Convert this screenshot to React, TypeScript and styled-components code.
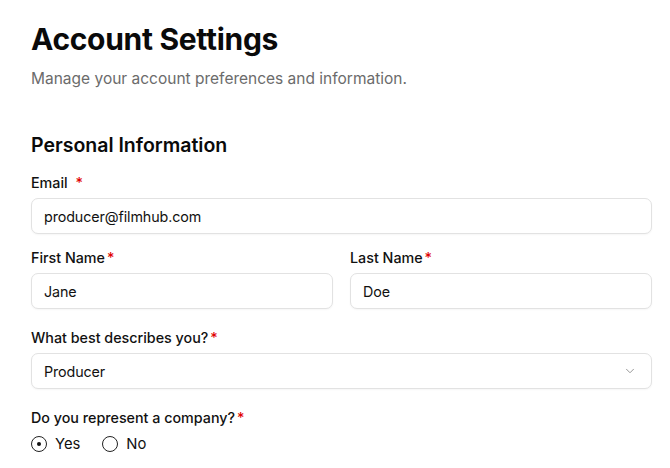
import styled, { createGlobalStyle } from "styled-components";
import { useState } from "react";

const GlobalStyle = createGlobalStyle`
  body {
    margin: 0;
    background: #ffffff;
    font-family: Inter, "Noto Sans", sans-serif;
    color: #111111;
  }
`;

const roles = ["Producer", "Director", "Writer", "Actor", "Other"];

const App = () => {
  const [email, setEmail] = useState("producer@filmhub.com");
  const [firstName, setFirstName] = useState("Jane");
  const [lastName, setLastName] = useState("Doe");
  const [role, setRole] = useState("Producer");
  const [company, setCompany] = useState("yes");

  return (
    <>
      <GlobalStyle />
      <Page>
        <Header>
          <Title>Account Settings</Title>
          <Subtitle>Manage your account preferences and information.</Subtitle>
        </Header>

        <Section>
          <SectionTitle>Personal Information</SectionTitle>

          <Field after={15}>
            <Label>
              Email <Required spaced>*</Required>
            </Label>
            <Input value={email} onChange={(e) => setEmail(e.target.value)} />
          </Field>

          <Row>
            <Field>
              <Label>
                First Name<Required>*</Required>
              </Label>
              <Input value={firstName} onChange={(e) => setFirstName(e.target.value)} />
            </Field>
            <Field>
              <Label>
                Last Name<Required>*</Required>
              </Label>
              <Input value={lastName} onChange={(e) => setLastName(e.target.value)} />
            </Field>
          </Row>

          <Field>
            <Label>
              What best describes you?<Required>*</Required>
            </Label>
            <SelectWrap>
              <Select value={role} onChange={(e) => setRole(e.target.value)}>
                {roles.map((r) => (
                  <option key={r}>{r}</option>
                ))}
              </Select>
              <Chevron width="14" height="14" viewBox="0 0 24 24">
                <path d="M6 9l6 6 6-6" />
              </Chevron>
            </SelectWrap>
          </Field>

          <Field>
            <Label>
              Do you represent a company?<Required>*</Required>
            </Label>
            <RadioGroup>
              <RadioOption>
                <Radio checked={company === "yes"} onClick={() => setCompany("yes")} />
                Yes
              </RadioOption>
              <RadioOption>
                <Radio checked={company === "no"} onClick={() => setCompany("no")} />
                No
              </RadioOption>
            </RadioGroup>
          </Field>
        </Section>
      </Page>
    </>
  );
};

const Page = styled.div`
  width: 621px;
  padding: 20px 0 0 31px;
  display: flex;
  flex-direction: column;
`;

const Header = styled.div`
  display: flex;
  flex-direction: column;
  gap: 10px;
`;

const Title = styled.h1`
  margin: 0;
  font-size: 30px;
  line-height: 38px;
  font-weight: 700;
  letter-spacing: -0.3px;
  color: #0a0a0a;
`;

const Subtitle = styled.p`
  margin: 0;
  font-size: 15.5px;
  line-height: 22px;
  color: #6b6b6b;
`;

const Section = styled.div`
  margin-top: 42px;
  display: flex;
  flex-direction: column;
`;

const SectionTitle = styled.h2`
  margin: 0 0 16px;
  font-size: 19.5px;
  line-height: 26px;
  font-weight: 600;
  color: #0a0a0a;
`;

const Field = styled.div<{ after?: number }>`
  flex: 1;
  display: flex;
  flex-direction: column;
  gap: 6px;
  margin-bottom: ${({ after }) => after ?? 20}px;
`;

const Row = styled.div`
  display: flex;
  gap: 17px;
`;

const Label = styled.label`
  font-size: 14.3px;
  line-height: 18px;
  font-weight: 500;
  color: #111111;
`;

const Required = styled.span<{ spaced?: boolean }>`
  color: #e00000;
  margin-left: ${({ spaced }) => (spaced ? "4px" : "2px")};
`;

const Input = styled.input`
  box-sizing: border-box;
  width: 100%;
  height: 36px;
  padding: 0 12px;
  border: 1px solid #e2e2e2;
  border-radius: 7px;
  font-family: inherit;
  font-size: 14.3px;
  letter-spacing: -0.1px;
  color: #111111;
  background: #ffffff;
  box-shadow: 0 1px 2px rgba(0, 0, 0, 0.04);
  outline: none;
`;

const SelectWrap = styled.div`
  position: relative;
`;

const Select = styled.select`
  box-sizing: border-box;
  width: 100%;
  height: 36px;
  padding: 0 12px;
  border: 1px solid #e2e2e2;
  border-radius: 7px;
  font-family: inherit;
  font-size: 14.3px;
  letter-spacing: -0.1px;
  color: #111111;
  background: #ffffff;
  box-shadow: 0 1px 2px rgba(0, 0, 0, 0.04);
  appearance: none;
  outline: none;
`;

const Chevron = styled.svg`
  position: absolute;
  right: 15px;
  top: 11px;
  fill: none;
  stroke: #8f8f8f;
  stroke-width: 1.6;
  stroke-linecap: round;
  stroke-linejoin: round;
  pointer-events: none;
`;

const RadioGroup = styled.div`
  display: flex;
  gap: 22px;
  margin-top: 2px;
`;

const RadioOption = styled.label`
  display: flex;
  align-items: center;
  gap: 8px;
  font-size: 14.8px;
  color: #111111;
  cursor: pointer;
`;

const Radio = styled.span<{ checked: boolean }>`
  box-sizing: border-box;
  width: 16px;
  height: 16px;
  border-radius: 50%;
  border: 1.5px solid #222222;
  display: flex;
  align-items: center;
  justify-content: center;

  &::after {
    content: "";
    width: 4px;
    height: 4px;
    border-radius: 50%;
    background: #111111;
    display: ${({ checked }) => (checked ? "block" : "none")};
  }
`;

export default App;
